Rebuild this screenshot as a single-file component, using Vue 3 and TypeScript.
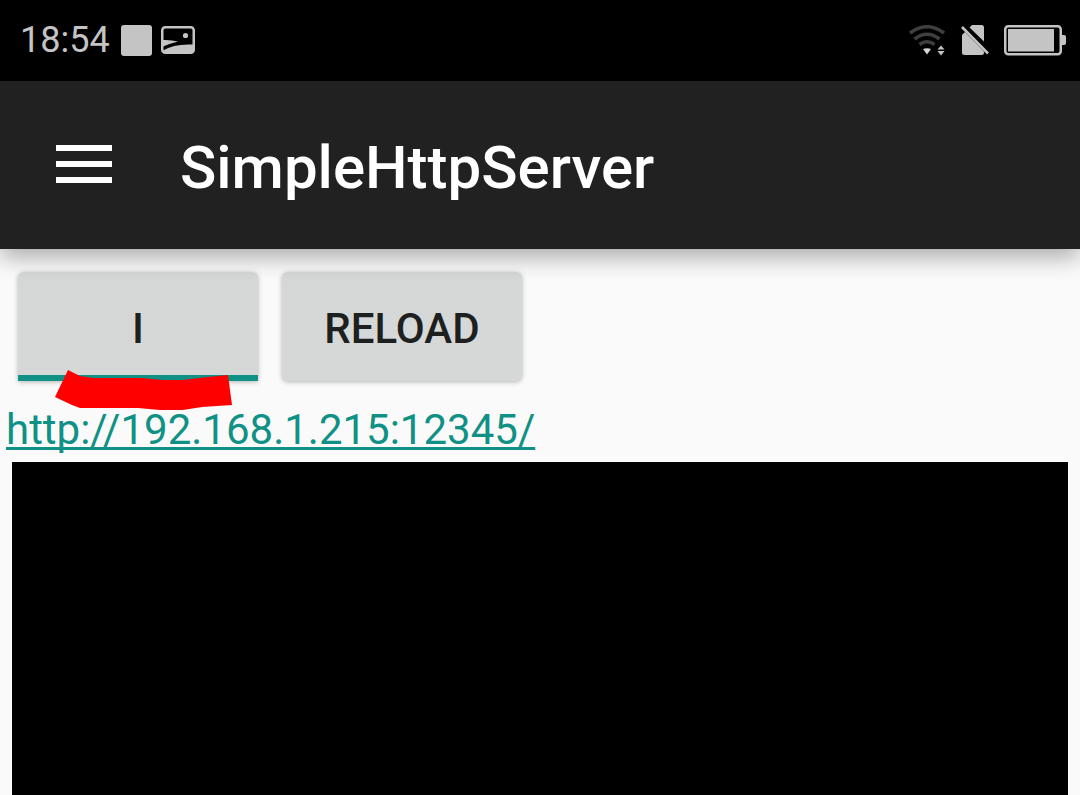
<script setup lang="ts">
import { ref } from 'vue'

const time = '18:54'
const title = 'SimpleHttpServer'
const serverUrl = 'http://192.168.1.215:12345/'
const running = ref(true)

function toggleServer(): void {
  running.value = !running.value
}

function reload(): void {
  running.value = true
}
</script>

<template>
  <div class="screen">
    <div class="status">
      <span class="clock">{{ time }}</span>
      <svg class="icon" width="32" height="32" viewBox="0 0 32 32" aria-hidden="true">
        <rect x="0" y="0" width="31" height="31" rx="3" fill="#c4c4c4" />
      </svg>
      <svg class="icon picture" width="34" height="30" viewBox="0 0 34 30" aria-hidden="true">
        <rect x="1.25" y="1.25" width="31.5" height="25.5" rx="3" fill="none" stroke="#c4c4c4" stroke-width="2.5" />
        <circle cx="24.5" cy="9.5" r="2.6" fill="#c4c4c4" />
        <path d="M2 14Q9 13.500 17 15.500Q9 17.500 2 20.500Z" fill="#c4c4c4" />
        <path d="M2 24.500Q13 17.500 32 18.500V26H3Z" fill="#c4c4c4" />
      </svg>
      <span class="spacer"></span>
      <svg class="icon wifi" width="36" height="32" viewBox="0 0 36 32" aria-hidden="true">
        <g fill="none" stroke="#3f3f3f" stroke-width="3.6">
          <path d="M1 8Q18 -4.500 35 8" />
          <path d="M5.500 14Q18 4.500 30.500 14" />
          <path d="M10.500 19.500Q18 14 25.500 19.500" />
        </g>
        <path d="M14 24Q18 22.500 22 24L18 29.500Z" fill="#d6d6d6" />
        <path d="M28.500 24.500L32 20.500L35.500 24.500ZM28.500 26H35.500L32 30.500Z" fill="#c4c4c4" />
      </svg>
      <svg class="icon sim" width="28" height="34" viewBox="0 0 28 34" aria-hidden="true">
        <path d="M11 1H20.500Q23 1 23 3.500V17.500L8.500 3.500Z" fill="#c4c4c4" />
        <path d="M4 8L23 27.500V28.500Q23 31 20.500 31H3.500Q1 31 1 28.500V11Z" fill="#c4c4c4" />
        <path d="M1 3L27 29.500" stroke="#c4c4c4" stroke-width="2.500" />
      </svg>
      <svg class="icon battery" width="62" height="32" viewBox="0 0 62 32" aria-hidden="true">
        <rect x="1.250" y="1.250" width="55.500" height="28" rx="3" fill="none" stroke="#c4c4c4" stroke-width="2.500" />
        <rect x="4" y="4" width="46" height="22.500" fill="#c4c4c4" />
        <path d="M58 10H60Q62 10 62 12V18Q62 20 60 20H58Z" fill="#c4c4c4" />
      </svg>
    </div>

    <header class="appbar">
      <button class="menu" type="button" aria-label="Open navigation">
        <svg width="56" height="40" viewBox="0 0 56 40" aria-hidden="true">
          <path d="M0 0H56V6H0ZM0 16H56V22H0ZM0 32H56V38H0Z" fill="#fff" />
        </svg>
      </button>
      <h1>{{ title }}</h1>
    </header>

    <main class="content">
      <div class="actions">
        <div class="toggle-wrap">
          <button class="btn" :class="{ on: running }" type="button" :aria-pressed="running" @click="toggleServer">I</button>
          <svg class="marker" width="178" height="42" viewBox="0 0 178 42" aria-hidden="true">
            <path d="M14 0L26 6L39 8H87L110 10H129L145 8L174 5L178 35L148 37L129 40H106L84 38H26L18 35L1 27Z" fill="#f00" />
          </svg>
        </div>
        <button class="btn" type="button" @click="reload">RELOAD</button>
      </div>
      <a class="url" :href="serverUrl">{{ serverUrl }}</a>
      <section class="log" aria-label="Server log"></section>
    </main>
  </div>
</template>

<style>
body {
  margin: 0;
  background: #fafafa;
}
</style>

<style scoped>
.screen {
  display: flex;
  flex-direction: column;
  min-height: 100vh;
  font-family: Roboto, "Noto Sans", sans-serif;
  background: #fafafa;
  overflow: hidden;
}

.status {
  display: flex;
  align-items: center;
  height: 81px;
  padding: 0 14px 0 20px;
  box-sizing: border-box;
  background: #000;
  color: #c4c4c4;
}

.clock {
  font-size: 36px;
  line-height: 42px;
  margin: 0 11px 2px 0;
}

.icon {
  display: block;
  flex: none;
}

.picture {
  margin-left: 8px;
}

.spacer {
  flex: 1;
}

.sim {
  margin-left: 16px;
}

.battery {
  margin-left: 15px;
}

.appbar {
  position: relative;
  z-index: 1;
  display: flex;
  align-items: center;
  height: 168px;
  padding: 0 56px;
  box-sizing: border-box;
  background: #212121;
  box-shadow: 0 8px 22px rgba(0, 0, 0, 0.32);
}

.menu {
  padding: 0;
  border: 0;
  background: none;
}

.menu svg {
  display: block;
}

h1 {
  margin: 6px 0 0 68px;
  font-size: 60px;
  line-height: 70px;
  font-weight: 500;
  color: #fff;
}

.content {
  flex: 1;
  display: flex;
  flex-direction: column;
}

.actions {
  display: flex;
  gap: 24px;
  padding: 23px 18px 24px;
}

.toggle-wrap {
  position: relative;
}

.btn {
  display: block;
  width: 240px;
  height: 109px;
  padding: 4px 0 0;
  border: 0;
  border-radius: 6px;
  background: #d6d7d7;
  box-shadow: 0 1px 5px rgba(0, 0, 0, 0.28);
  color: #1e1f1f;
  font-family: inherit;
  font-size: 42px;
  line-height: 50px;
  font-weight: 500;
}

.btn.on {
  padding-top: 10px;
  border-bottom: 6px solid #109185;
  border-radius: 6px 6px 0 0;
}

.marker {
  position: absolute;
  left: 36px;
  top: 98px;
  pointer-events: none;
}

.url {
  align-self: flex-start;
  margin: 0 6px 8px;
  font-size: 42px;
  line-height: 49px;
  color: #109185;
  text-decoration: underline;
  text-decoration-thickness: 3px;
  text-underline-offset: 3px;
  text-decoration-skip-ink: none;
}

.log {
  flex: 1;
  margin: 0 12px;
  background: #000;
}
</style>
